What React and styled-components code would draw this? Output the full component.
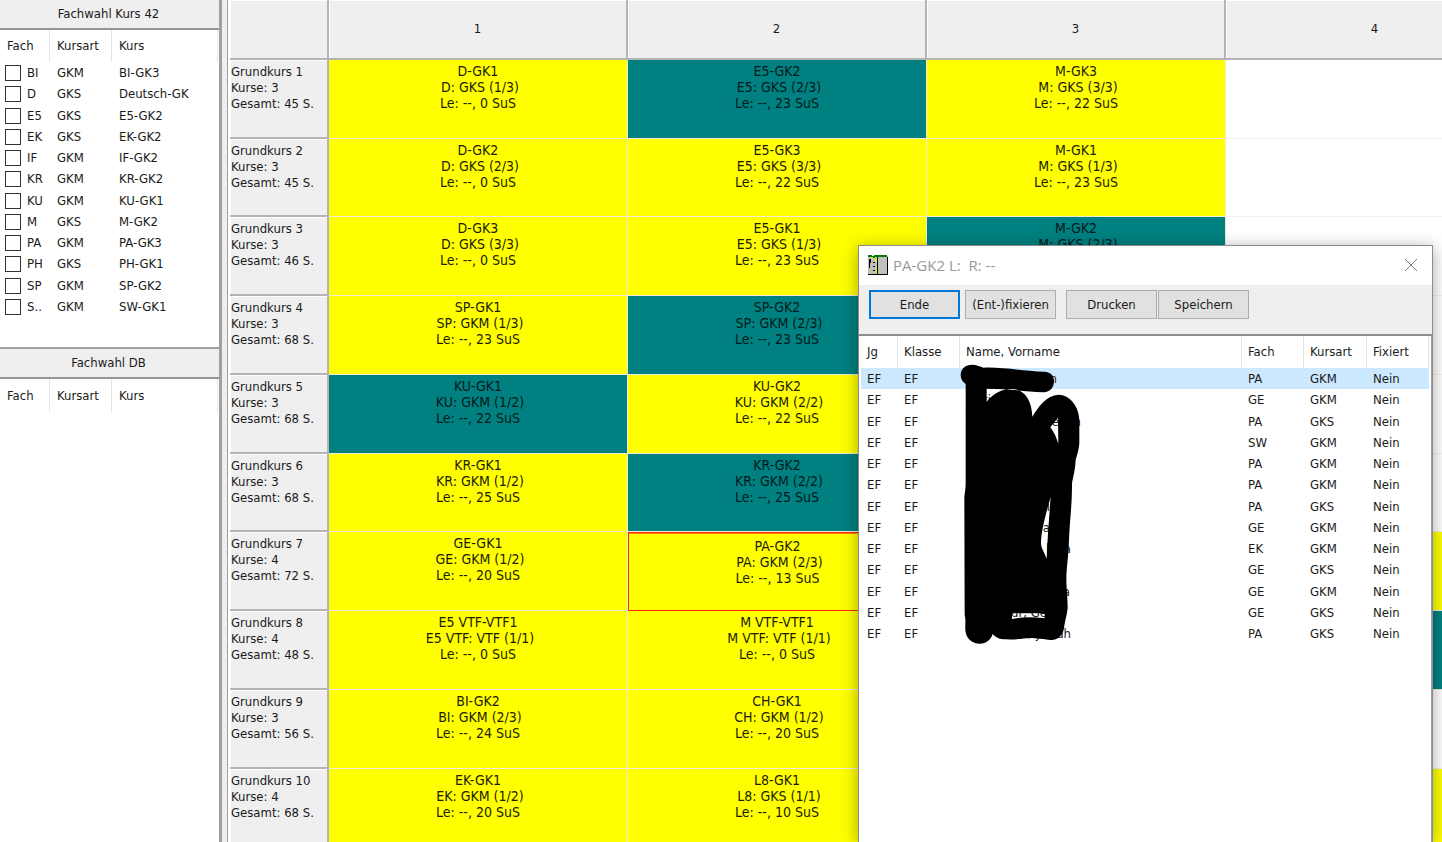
import React from "react";
import styled, { createGlobalStyle, css } from "styled-components";

const line = "#a0a0a0";
const face = "#efefef";

const GlobalStyle = createGlobalStyle`
  *, *::before, *::after { box-sizing: border-box; }
  body {
    margin: 0;
    background: #fff;
    color: #1a1a1a;
    font: 13px/16px "DejaVu Sans Condensed", Tahoma, "DejaVu Sans", sans-serif;
  }
  button, input { font: inherit; color: inherit; margin: 0; }
`;

const Desktop = styled.div`
  position: relative;
  display: flex;
  height: 100vh;
  overflow: hidden;
`;

const Sidebar = styled.aside`
  flex: 0 0 222px;
  display: flex;
  flex-direction: column;
  border-right: 3px solid ${line};
`;

const Panel = styled.section`
  flex: ${(p) => (p.$fill ? "1" : "0 0 349px")};
  display: flex;
  flex-direction: column;
  border-bottom: ${(p) => (p.$fill ? "0" : `2px solid ${line}`)};
`;

const PanelTitle = styled.h2`
  margin: 0;
  height: 30px;
  padding-top: 6px;
  padding-right: 2px;
  background: ${face};
  border-bottom: 2px solid #95959a;
  font-size: 13px;
  font-weight: 400;
  text-align: center;
`;

const Splitter = styled.div`
  flex: 0 0 8px;
  background: ${face};
  border-right: 2px solid #fff;
  box-shadow: inset -1px 0 ${line};
`;

const List = styled.table`
  table-layout: fixed;
  width: ${(p) => p.$width}px;
  border-spacing: 0;

  th, td { padding: 0 0 0 ${(p) => p.$indent}px; }
  th {
    height: ${(p) => p.$head}px;
    border-right: 1px solid #e4e4e4;
    font-weight: 400;
    text-align: left;
  }
  td {
    height: 21px;
    white-space: pre;
  }
  tbody tr:nth-child(4n + 2) td { height: 22px; }
`;

const ListRow = styled.tr`
  background: ${(p) => (p.$selected ? "#cce8ff" : "transparent")};
`;

const TickLabel = styled.label`
  display: flex;
  align-items: center;
  gap: 6px;
  margin-left: -2px;
`;

const Tick = styled.input`
  appearance: none;
  flex: none;
  width: 16px;
  height: 16px;
  border: 1px solid #333;
  background: #fff;
`;

const Plan = styled.main`
  flex: 1;
  min-width: 0;
  overflow: hidden;
`;

const PlanTable = styled.table`
  table-layout: fixed;
  width: 1295px;
  border-spacing: 0;

  td, th { font-weight: 400; vertical-align: top; white-space: pre; }
  tbody tr { height: 79px; }
  tbody tr:nth-child(4n + 2) { height: 78px; }
`;

const raised = css`
  background: ${face};
  border-style: solid;
  border-width: 0 2px 2px 0;
  border-color: #b4b4b4;
  box-shadow: inset 1px 1px #fff;
`;

const ColumnHead = styled.th`
  ${raised}
  height: 60px;
  padding: 0;
  && { vertical-align: middle; }
`;

const RowHead = styled.th`
  ${raised}
  padding: 4px 0 0 1px;
  text-align: left;
`;

const fills = { y: "#ffff00", t: "#008080", w: "#ffffff" };

const Course = styled.td`
  padding: ${(p) => (p.$current ? "5px 0 0" : "3px 0 0")};
  background: ${(p) => fills[p.$fill]};
  border-right: 1px solid #ececd8;
  border-bottom: 1px solid #ececd8;
  color: ${(p) => (p.$fill === "t" ? "#001a1a" : "#1c1c00")};
  font-size: 14px;
  text-align: center;
  ${(p) => p.$fill === "w" && "border-color: #f0f0f0;"}
  ${(p) => p.$current && "border: 1px solid #ff2a00; box-shadow: inset 0 1px #ff7a00;"}
`;

const Dialog = styled.section`
  position: absolute;
  top: 245px;
  right: 9px;
  bottom: 0;
  width: 575px;
  display: flex;
  flex-direction: column;
  background: #fff;
  border: 1px solid #8c8c8c;
  border-bottom: 0;
  box-shadow: 0 3px 16px rgba(0, 0, 0, 0.35);
`;

const TitleBar = styled.header`
  display: flex;
  align-items: center;
  gap: 5px;
  height: 39px;
  padding: 0 12px 2px 9px;
  color: #999;
`;

const DialogTitle = styled.h1`
  flex: 1;
  margin: 0;
  font: 400 15px/20px "Open Sans", "Noto Sans", sans-serif;
  white-space: pre;
`;

const CloseButton = styled.button`
  display: flex;
  padding: 2px;
  border: 0;
  background: none;
`;

const Toolbar = styled.div`
  display: flex;
  gap: 5px;
  height: 51px;
  padding: 5px 10px;
  background: ${face};
  border-bottom: 2px solid #8a8d92;
`;

const ButtonPair = styled.div`
  display: flex;
  margin-left: 5px;
  gap: 1px;
`;

const PushButton = styled.button`
  width: 91px;
  height: 29px;
  padding: 0;
  background: #e1e1e1;
  border: ${(p) => (p.$default ? "2px solid #0078d7" : "1px solid #adadad")};
`;

const ListArea = styled.div`
  position: relative;
  flex: 1;
  padding-left: 2px;
  border-right: 1px solid #9aa0aa;
`;

const NameEnd = styled.span`
  display: block;
  width: ${(p) => p.$end}px;
  text-align: right;
`;

const Redaction = styled.svg`
  position: absolute;
  left: 81px;
  top: 24px;
  width: 180px;
  height: 300px;
`;

const choices = [
  ["BI", "GKM", "BI-GK3"],
  ["D", "GKS", "Deutsch-GK"],
  ["E5", "GKS", "E5-GK2"],
  ["EK", "GKS", "EK-GK2"],
  ["IF", "GKM", "IF-GK2"],
  ["KR", "GKM", "KR-GK2"],
  ["KU", "GKM", "KU-GK1"],
  ["M", "GKS", "M-GK2"],
  ["PA", "GKM", "PA-GK3"],
  ["PH", "GKS", "PH-GK1"],
  ["SP", "GKM", "SP-GK2"],
  ["S..", "GKM", "SW-GK1"],
];

const plan = [
  [3, 45, ["y", "D-GK1", "D: GKS (1/3)", 0], ["t", "E5-GK2", "E5: GKS (2/3)", 23], ["y", "M-GK3", "M: GKS (3/3)", 22], ["w"]],
  [3, 45, ["y", "D-GK2", "D: GKS (2/3)", 0], ["y", "E5-GK3", "E5: GKS (3/3)", 22], ["y", "M-GK1", "M: GKS (1/3)", 23], ["w"]],
  [3, 46, ["y", "D-GK3", "D: GKS (3/3)", 0], ["y", "E5-GK1", "E5: GKS (1/3)", 23], ["t", "M-GK2", "M: GKS (2/3)", 23], ["w"]],
  [3, 68, ["y", "SP-GK1", "SP: GKM (1/3)", 23], ["t", "SP-GK2", "SP: GKM (2/3)", 23], ["y"], ["w"]],
  [3, 68, ["t", "KU-GK1", "KU: GKM (1/2)", 22], ["y", "KU-GK2", "KU: GKM (2/2)", 22], ["y"], ["w"]],
  [3, 68, ["y", "KR-GK1", "KR: GKM (1/2)", 25], ["t", "KR-GK2", "KR: GKM (2/2)", 25], ["y"], ["w"]],
  [4, 72, ["y", "GE-GK1", "GE: GKM (1/2)", 20], ["y", "PA-GK2", "PA: GKM (2/3)", 13, true], ["y"], ["y"]],
  [4, 48, ["y", "E5 VTF-VTF1", "E5 VTF: VTF (1/1)", 0], ["y", "M VTF-VTF1", "M VTF: VTF (1/1)", 0], ["y"], ["t"]],
  [3, 56, ["y", "BI-GK2", "BI: GKM (2/3)", 24], ["y", "CH-GK1", "CH: GKM (1/2)", 20], ["y"], ["w"]],
  [4, 68, ["y", "EK-GK1", "EK: GKM (1/2)", 20], ["y", "L8-GK1", "L8: GKS (1/1)", 10], ["y"], ["y"]],
];

const pupils = [
  ["n", 91, "PA", "GKM"],
  ["ti", 25, "GE", "GKM"],
  ["enna", 115, "PA", "GKS"],
  ["", 0, "SW", "GKM"],
  ["", 0, "PA", "GKM"],
  ["", 0, "PA", "GKM"],
  ["i", 84, "PA", "GKS"],
  ["la", 84, "GE", "GKM"],
  ["lana", 105, "EK", "GKM"],
  ["", 0, "GE", "GKS"],
  ["a", 104, "GE", "GKM"],
  ["ur, Ge", 81, "GE", "GKS"],
  ["ri, y    ah", 105, "PA", "GKS"],
];

function ChoiceList({ rows }) {
  return (
    <List $width={218} $indent={7} $head={rows.length ? 32 : 33}>
      <colgroup>
        <col width="50" />
        <col width="62" />
        <col width="106" />
      </colgroup>
      <thead>
        <tr><th>Fach</th><th>Kursart</th><th>Kurs</th></tr>
      </thead>
      <tbody>
        {rows.map(([subject, kind, course]) => (
          <tr key={subject}>
            <td><TickLabel><Tick type="checkbox" />{subject}</TickLabel></td>
            <td>{kind}</td>
            <td>{course}</td>
          </tr>
        ))}
      </tbody>
    </List>
  );
}

function CourseCell({ data: [fill, name, kind, pupilCount, current] }) {
  return (
    <Course $fill={fill} $current={current}>
      {name && `${name}\n ${kind}\nLe: --, ${pupilCount} SuS`}
    </Course>
  );
}

function AppIcon() {
  return (
    <svg width="20" height="20" viewBox="0 0 20 20" aria-hidden="true" shapeRendering="crispEdges">
      <path fill="#c0c0c0" d="M0 1h20v19H0z" />
      <path fill="#087808" d="M0 0h4v1h2V0h13v2H7v1H5V2H0z" />
      <path fill="#e8e800" d="M2 2h3v1H2zM7 3h2v3H8v2H7zM8 11h1v7H7v-2h1z" />
      <path fill="#000" d="M9 2h1v18H9zM19 2h1v18h-1zM0 19h20v1H0zM1 4h1v9H1zM2 4h1v4H2zM5 7h2v1H5zM5 11h2v1H5zM5 15h2v1H5z" />
    </svg>
  );
}

export default function App() {
  return (
    <Desktop>
      <GlobalStyle />
      <Sidebar>
        <Panel>
          <PanelTitle>Fachwahl Kurs 42</PanelTitle>
          <ChoiceList rows={choices} />
        </Panel>
        <Panel $fill>
          <PanelTitle>Fachwahl DB</PanelTitle>
          <ChoiceList rows={[]} />
        </Panel>
      </Sidebar>
      <Splitter />
      <Plan>
        <PlanTable>
          <colgroup>
            <col width="99" />
            <col width="299" />
            <col width="299" />
            <col width="299" />
            <col width="299" />
          </colgroup>
          <thead>
            <tr>
              <ColumnHead />
              {[1, 2, 3, 4].map((n) => <ColumnHead key={n} scope="col">{n}</ColumnHead>)}
            </tr>
          </thead>
          <tbody>
            {plan.map(([count, total, ...cells], i) => (
              <tr key={i}>
                <RowHead scope="row">{`Grundkurs ${i + 1}\nKurse: ${count}\nGesamt: ${total} S.`}</RowHead>
                {cells.map((cell, c) => <CourseCell key={c} data={cell} />)}
              </tr>
            ))}
          </tbody>
        </PlanTable>
      </Plan>
      <Dialog role="dialog" aria-labelledby="dialog-title">
        <TitleBar>
          <AppIcon />
          <DialogTitle id="dialog-title">{"PA-GK2 L:  R: --"}</DialogTitle>
          <CloseButton aria-label="Schließen">
            <svg width="14" height="14" viewBox="0 0 14 14" stroke="#777" fill="none">
              <path d="M1 1l12 12M13 1L1 13" />
            </svg>
          </CloseButton>
        </TitleBar>
        <Toolbar>
          <PushButton $default>Ende</PushButton>
          <PushButton>(Ent-)fixieren</PushButton>
          <ButtonPair>
            <PushButton>Drucken</PushButton>
            <PushButton>Speichern</PushButton>
          </ButtonPair>
        </Toolbar>
        <ListArea>
          <List $width={568} $indent={6} $head={32}>
            <colgroup>
              <col width="37" />
              <col width="62" />
              <col width="282" />
              <col width="62" />
              <col width="63" />
              <col width="62" />
            </colgroup>
            <thead>
              <tr>
                <th>Jg</th><th>Klasse</th><th>Name, Vorname</th><th>Fach</th><th>Kursart</th><th>Fixiert</th>
              </tr>
            </thead>
            <tbody>
              {pupils.map(([name, end, subject, kind], i) => (
                <ListRow key={i} $selected={i === 0}>
                  <td>EF</td>
                  <td>EF</td>
                  <td><NameEnd $end={end}>{name}</NameEnd></td>
                  <td>{subject}</td>
                  <td>{kind}</td>
                  <td>Nein</td>
                </ListRow>
              ))}
            </tbody>
          </List>
          <Redaction viewBox="0 0 540 900" aria-hidden="true">
            <path
              fillRule="evenodd"
              d="M62 45C62 25 78 14 95 14C110 14 122 20 130 23C190 21 250 33 312 35C335 36 343 50 342 66C340 88 325 97 308 97C260 96 215 86 140 86L140 125C160 100 185 87 215 87C250 87 275 115 277 170C295 140 320 105 355 104C390 104 417 140 418 180L418 250C416 275 408 295 407 300C405 340 396 360 396 375C396 440 389 480 387 540C385 600 379 620 379 665C380 690 383 720 383 745C380 770 373 790 372 805C368 830 350 842 330 840C300 836 280 834 265 834C240 838 215 839 190 838C175 837 165 830 158 822C152 840 138 851 120 851C95 851 78 835 76 810C75 790 78 780 74 765L73 420C73 400 77 390 77 370L77 72C66 65 62 55 62 45Z
                 M331 202L354 173L355 252C350 235 342 215 331 202Z
                 M332 410C327 480 322 540 320 597C315 580 303 565 303 550C303 510 320 455 332 410Z
                 M216 760L314 760L314 775C280 770 250 770 216 777Z"
            />
          </Redaction>
        </ListArea>
      </Dialog>
    </Desktop>
  );
}
